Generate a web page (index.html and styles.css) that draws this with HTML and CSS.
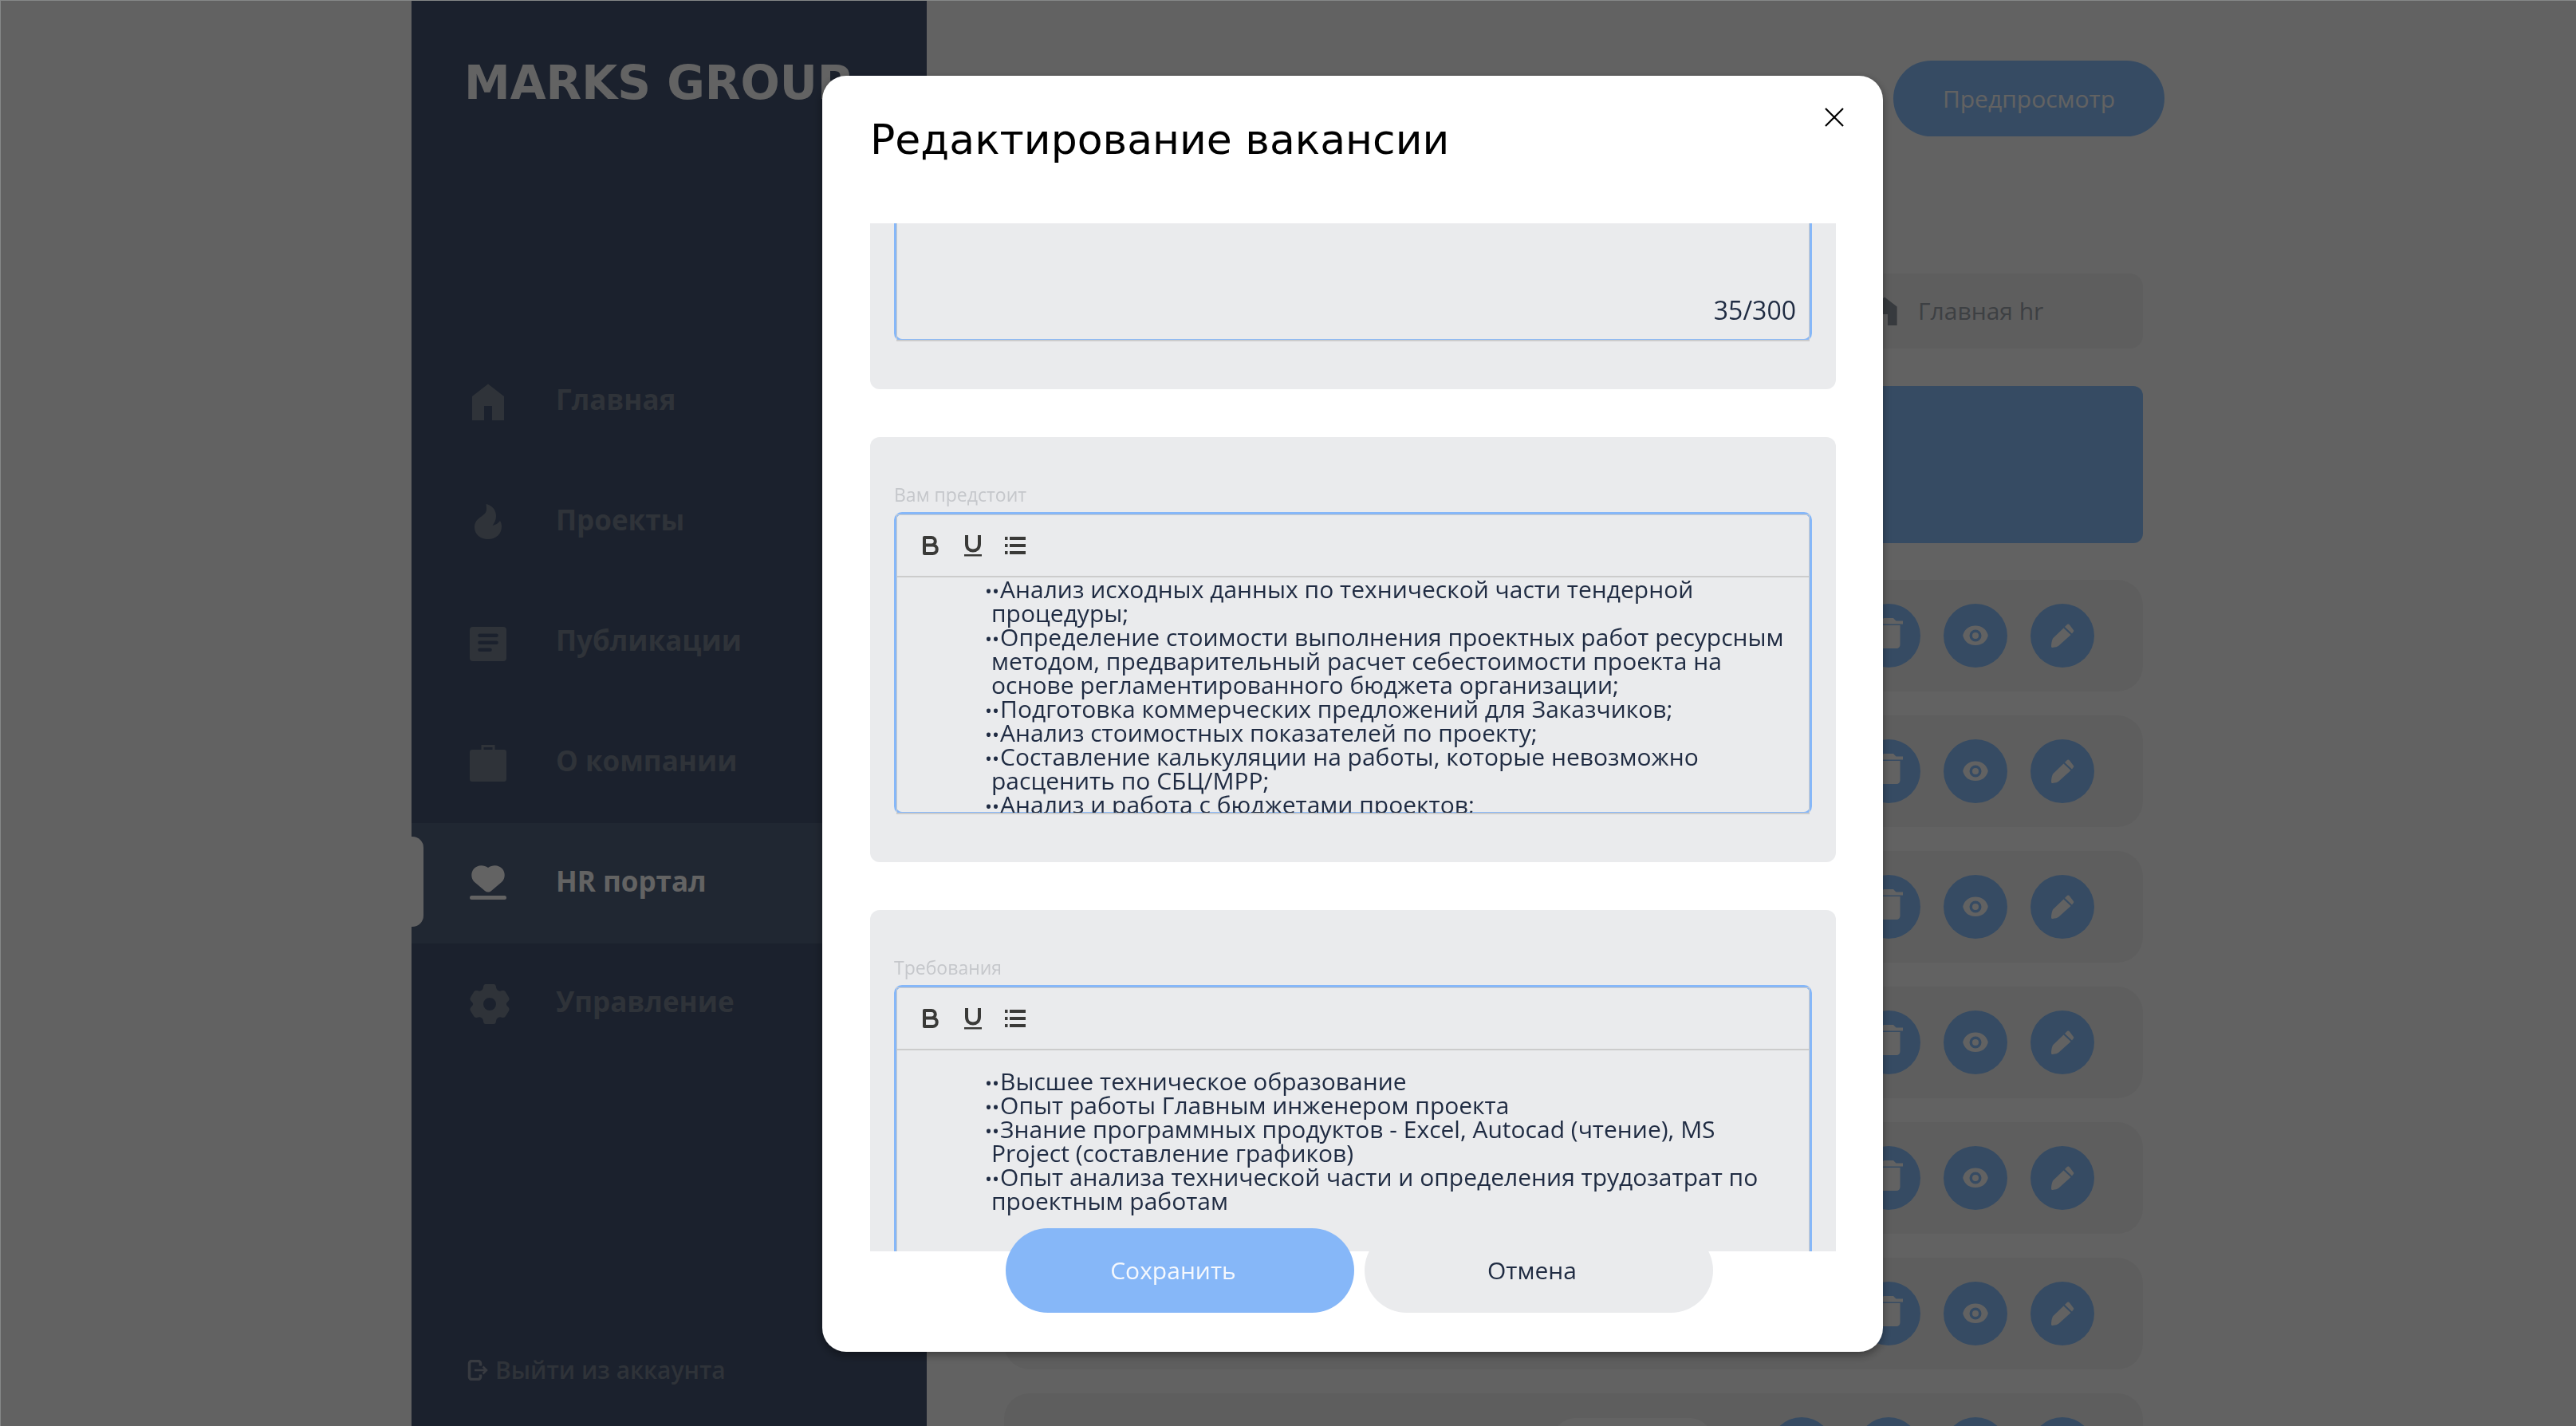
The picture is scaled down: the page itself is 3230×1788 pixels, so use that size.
FILE: index.html
```html
<!DOCTYPE html>
<html lang="ru">
<head>
<meta charset="utf-8">
<title>Редактирование вакансии</title>
<meta name="viewport" content="width=device-width, initial-scale=1">
<link rel="stylesheet" href="styles.css">
</head>
<body>
<svg class="sprite" aria-hidden="true">
  <symbol id="i-home" viewBox="0 0 46 46"><path d="M23 0.500L3 16v30h15V28h10v18h15V16z"/></symbol>
  <symbol id="i-fire" viewBox="0 0 46 46"><path d="M20.500 0C28 1.500 33 7.500 33 15c0 5-2 8-4.500 12C33 26 36 24 38 21c1.200 2 2 4.500 2 7C40 38 32.500 44 23 44S6 38 6 29c0-6 3-9.500 8-13 5-3.500 7-5.500 7-10 0-2-.2-4-.5-6z"/></symbol>
  <symbol id="i-article" viewBox="0 0 46 46"><path fill-rule="evenodd" d="M4 3h38a4 4 0 0 1 4 4v35a4 4 0 0 1-4 4H4a4 4 0 0 1-4-4V7a4 4 0 0 1 4-4zm8.500 8.500a2.300 2.300 0 0 0 0 4.600h21a2.300 2.300 0 0 0 0-4.600zm0 9a2.300 2.300 0 0 0 0 4.600h21a2.300 2.300 0 0 0 0-4.600zm0 9a2.300 2.300 0 0 0 0 4.600h13a2.300 2.300 0 0 0 0-4.600z"/></symbol>
  <symbol id="i-case" viewBox="0 0 46 46"><path fill-rule="evenodd" d="M14.500 6V0h17v6H43a3 3 0 0 1 3 3v34a3 3 0 0 1-3 3H3a3 3 0 0 1-3-3V9a3 3 0 0 1 3-3zm3 0h11V3h-11z"/></symbol>
  <symbol id="i-heart" viewBox="0 0 46 46"><path d="M23 3C29-1.500 37-.5 41 4.500c4 5 3.500 12-1 16.500L27 32c-2.500 2-5.500 2-8 0L6 21C1.500 16.500 1 9.500 5 4.500 9-.5 17-1.500 23 3z"/><rect y="38" width="46" height="5" rx="2.500"/></symbol>
  <symbol id="i-gear" viewBox="0 0 50 50"><path fill-rule="evenodd" d="M20 0h10c2 0 3 2 3 4 .4 3 3 5.500 6 4.500 3-1 5-.5 6 1.500l4 6.500c1.500 3-.5 4.500-2 6-1.500 1.500-1.500 3.500 0 5s3.500 3 2 6L45 40c-1 2-3 2.500-6 1.500s-5.600 1.500-6 4.500c0 2-1 4-3 4H20c-2 0-3-2-3-4-.4-3-3-5.500-6-4.500s-5 .5-6-1.500l-4-6.500c-1.500-3 .5-4.500 2-6s1.500-3.500 0-5-3.500-3-2-6L5 10c1-2 3-2.500 6-1.500s5.600-1.500 6-4.500c0-2 1-4 3-4zm5 17a8 8 0 1 0 0 16 8 8 0 0 0 0-16z"/></symbol>
  <symbol id="i-exit" viewBox="0 0 26 26"><g fill="none" stroke="currentColor" stroke-width="3.500"><path d="M16.500 7.500V4.500a3 3 0 0 0-3-3h-8a3 3 0 0 0-3 3v17a3 3 0 0 0 3 3h8a3 3 0 0 0 3-3v-3"/><path d="M9 13h14M19.500 8.500L24 13l-4.500 4.500" stroke-width="2.500"/></g></symbol>
  <symbol id="i-trash" viewBox="0 0 80 80"><path d="M34 18h12l3.500 3.500H58v4H22v-4h8.500zM25.500 27h29v24.500a4.500 4.500 0 0 1-4.500 4.500H30a4.500 4.500 0 0 1-4.500-4.500z"/></symbol>
  <symbol id="i-eye" viewBox="0 0 80 80"><path fill-rule="evenodd" d="M40 27.500c8 0 13 4 15.500 11a3.500 3.500 0 0 1 0 2.500C53 48 48 52 40 52s-13-4-15.500-11a3.500 3.500 0 0 1 0-2.500c2.500-7 7.500-11 15.500-11zm0 5a7.500 7.500 0 1 0 0 15 7.500 7.500 0 0 0 0-15z"/><circle cx="40" cy="40" r="4"/></symbol>
  <symbol id="i-pencil" viewBox="0 0 80 80"><path d="M49 26.500c-1.500-1.500-2.500-1-4 .5l-2 2 9 8.500 1.500-2c1-1 1-2 0-3zM41.500 30.500L29 42.500c-1.500 1.500-2.500 4-3 10.500 0 1.500.5 2 1.500 2 4-.5 6-1 8-2.500l15-13.500z"/></symbol>
  <symbol id="i-close" viewBox="0 0 24 24"><path d="M1 1l22 22M23 1L1 23" fill="none" stroke="currentColor" stroke-width="2.200"/></symbol>
  <symbol id="i-bold" viewBox="0 0 36 36"><g fill="none" stroke="currentColor" stroke-width="4" stroke-linejoin="round"><path d="M10 8h9a4.700 4.700 0 0 1 0 9.500h-9zM10 17.500h10.500a5 5 0 0 1 0 10.500H10z"/></g></symbol>
  <symbol id="i-underline" viewBox="0 0 36 36"><path d="M10 5v11c0 5.500 3.500 8.500 8 8.500s8-3 8-8.500V5" fill="none" stroke="currentColor" stroke-width="4"/><path d="M7 29h22v2.500H7z"/></symbol>
  <symbol id="i-list" viewBox="0 0 36 36"><path d="M11 7h20v4H11zm0 9h20v4H11zm0 9h20v4H11zM5 7h3.500v4H5zm0 9h3.500v4H5zm0 9h3.500v4H5z"/></symbol>
</svg>

<div class="app">
  <aside class="sidebar">
    <a class="logo" href="#">MARKS GROUP</a>
    <nav class="menu">
      <a class="menu-item" href="#"><svg class="menu-icon"><use href="#i-home"/></svg>Главная</a>
      <a class="menu-item" href="#"><svg class="menu-icon"><use href="#i-fire"/></svg>Проекты</a>
      <a class="menu-item" href="#"><svg class="menu-icon"><use href="#i-article"/></svg>Публикации</a>
      <a class="menu-item" href="#"><svg class="menu-icon"><use href="#i-case"/></svg>О компании</a>
      <a class="menu-item menu-item-active" href="#" aria-current="page"><svg class="menu-icon"><use href="#i-heart"/></svg>HR портал</a>
      <a class="menu-item" href="#"><svg class="menu-icon menu-icon-gear"><use href="#i-gear"/></svg>Управление</a>
    </nav>
    <button class="logout" type="button"><svg class="logout-icon"><use href="#i-exit"/></svg>Выйти из аккаунта</button>
  </aside>

  <main class="main">
    <header class="topbar"><button class="preview" type="button">Предпросмотр</button></header>
    <div class="content">
      <div class="tabs"><a class="tab" href="#"><svg class="tab-icon"><use href="#i-home"/></svg>Главная hr</a></div>
      <div class="banner"></div>
      <ul class="vacancies">
        <li class="vacancy"><span class="badge"></span><div class="actions"><button class="action" type="button" aria-label="Добавить"></button><button class="action" type="button" aria-label="Удалить"><svg><use href="#i-trash"/></svg></button><button class="action" type="button" aria-label="Показать"><svg><use href="#i-eye"/></svg></button><button class="action" type="button" aria-label="Изменить"><svg><use href="#i-pencil"/></svg></button></div></li>
        <li class="vacancy"><span class="badge"></span><div class="actions"><button class="action" type="button" aria-label="Добавить"></button><button class="action" type="button" aria-label="Удалить"><svg><use href="#i-trash"/></svg></button><button class="action" type="button" aria-label="Показать"><svg><use href="#i-eye"/></svg></button><button class="action" type="button" aria-label="Изменить"><svg><use href="#i-pencil"/></svg></button></div></li>
        <li class="vacancy"><span class="badge"></span><div class="actions"><button class="action" type="button" aria-label="Добавить"></button><button class="action" type="button" aria-label="Удалить"><svg><use href="#i-trash"/></svg></button><button class="action" type="button" aria-label="Показать"><svg><use href="#i-eye"/></svg></button><button class="action" type="button" aria-label="Изменить"><svg><use href="#i-pencil"/></svg></button></div></li>
        <li class="vacancy"><span class="badge"></span><div class="actions"><button class="action" type="button" aria-label="Добавить"></button><button class="action" type="button" aria-label="Удалить"><svg><use href="#i-trash"/></svg></button><button class="action" type="button" aria-label="Показать"><svg><use href="#i-eye"/></svg></button><button class="action" type="button" aria-label="Изменить"><svg><use href="#i-pencil"/></svg></button></div></li>
        <li class="vacancy"><span class="badge"></span><div class="actions"><button class="action" type="button" aria-label="Добавить"></button><button class="action" type="button" aria-label="Удалить"><svg><use href="#i-trash"/></svg></button><button class="action" type="button" aria-label="Показать"><svg><use href="#i-eye"/></svg></button><button class="action" type="button" aria-label="Изменить"><svg><use href="#i-pencil"/></svg></button></div></li>
        <li class="vacancy"><span class="badge"></span><div class="actions"><button class="action" type="button" aria-label="Добавить"></button><button class="action" type="button" aria-label="Удалить"><svg><use href="#i-trash"/></svg></button><button class="action" type="button" aria-label="Показать"><svg><use href="#i-eye"/></svg></button><button class="action" type="button" aria-label="Изменить"><svg><use href="#i-pencil"/></svg></button></div></li>
        <li class="vacancy"><span class="badge"></span><div class="actions"><button class="action" type="button" aria-label="Добавить"></button><button class="action" type="button" aria-label="Удалить"><svg><use href="#i-trash"/></svg></button><button class="action" type="button" aria-label="Показать"><svg><use href="#i-eye"/></svg></button><button class="action" type="button" aria-label="Изменить"><svg><use href="#i-pencil"/></svg></button></div></li>
      </ul>
    </div>
  </main>
</div>

<div class="overlay">
  <section class="modal" role="dialog" aria-modal="true" aria-labelledby="modal-title">
    <button class="close" type="button" aria-label="Закрыть"><svg><use href="#i-close"/></svg></button>
    <h1 class="modal-title" id="modal-title">Редактирование вакансии</h1>
    <div class="fields">
      <div class="field field-cut">
        <div class="editor"><div class="editor-box"><span class="counter">35/300</span></div></div>
      </div>

      <div class="field">
        <span class="label" id="label-tasks">Вам предстоит</span>
        <div class="editor">
          <div class="editor-box">
            <div class="toolbar">
              <button class="tool" type="button" aria-label="Полужирный"><svg><use href="#i-bold"/></svg></button>
              <button class="tool" type="button" aria-label="Подчёркнутый"><svg><use href="#i-underline"/></svg></button>
              <button class="tool" type="button" aria-label="Список"><svg><use href="#i-list"/></svg></button>
            </div>
            <div class="text text-scrolled" contenteditable="true" role="textbox" aria-multiline="true" aria-labelledby="label-tasks" spellcheck="false">
              <ul class="bullets">
                <li><span class="dots">••</span>Анализ исходных данных по технической части тендерной<br>процедуры;</li>
                <li><span class="dots">••</span>Определение стоимости выполнения проектных работ ресурсным<br>методом, предварительный расчет себестоимости проекта на<br>основе регламентированного бюджета организации;</li>
                <li><span class="dots">••</span>Подготовка коммерческих предложений для Заказчиков;</li>
                <li><span class="dots">••</span>Анализ стоимостных показателей по проекту;</li>
                <li><span class="dots">••</span>Составление калькуляции на работы, которые невозможно<br>расценить по СБЦ/МРР;</li>
                <li><span class="dots">••</span>Анализ и работа с бюджетами проектов;</li>
              </ul>
            </div>
          </div>
        </div>
      </div>

      <div class="field">
        <span class="label" id="label-skills">Требования</span>
        <div class="editor">
          <div class="editor-box">
            <div class="toolbar">
              <button class="tool" type="button" aria-label="Полужирный"><svg><use href="#i-bold"/></svg></button>
              <button class="tool" type="button" aria-label="Подчёркнутый"><svg><use href="#i-underline"/></svg></button>
              <button class="tool" type="button" aria-label="Список"><svg><use href="#i-list"/></svg></button>
            </div>
            <div class="text" contenteditable="true" role="textbox" aria-multiline="true" aria-labelledby="label-skills" spellcheck="false">
              <ul class="bullets">
                <li><span class="dots">••</span>Высшее техническое образование</li>
                <li><span class="dots">••</span>Опыт работы Главным инженером проекта</li>
                <li><span class="dots">••</span>Знание программных продуктов - Excel, Autocad (чтение), MS<br>Project (составление графиков)</li>
                <li><span class="dots">••</span>Опыт анализа технической части и определения трудозатрат по<br>проектным работам</li>
              </ul>
            </div>
          </div>
        </div>
      </div>
    </div>
    <footer class="buttons">
      <button class="button button-primary" type="button">Сохранить</button>
      <button class="button" type="button">Отмена</button>
    </footer>
  </section>
</div>
</body>
</html>
```
FILE: styles.css
```css
* { box-sizing: border-box; }

body {
  margin: 0;
  background: #f5f5f5;
  color: #1f2b42;
  font: 400 30px/30px "Open Sans", "Noto Sans", sans-serif;
}

button {
  margin: 0;
  padding: 0;
  border: 0;
  background: none;
  color: inherit;
  font: inherit;
}

a { color: inherit; text-decoration: none; }
svg { display: block; fill: currentColor; }
.sprite { display: none; }

/* Page */
.app {
  display: flex;
  max-width: 2198px;
  height: 100vh;
  margin: 0 auto;
  overflow: hidden;
}

.sidebar {
  display: flex;
  flex: 0 0 646px;
  flex-direction: column;
  padding: 76px 0 50px;
  background: #445370;
  color: #76808f;
}

.logo {
  padding-left: 66px;
  color: #f8f8f8;
  font: 700 58px/56px "DejaVu Sans", sans-serif;
  white-space: nowrap;
}

.menu { margin-top: 296px; }

.menu-item {
  display: flex;
  align-items: center;
  gap: 62px;
  height: 151px;
  padding: 0 0 6px 73px;
  font-size: 35px;
  font-weight: 700;
  line-height: 40px;
}

.menu-icon { width: 46px; height: 46px; margin-top: 6px; }
.menu-icon-gear { width: 50px; height: 50px; margin-right: -4px; }

.menu-item-active {
  position: relative;
  background: #52627d;
  color: #f8f8f8;
}

.menu-item-active::before {
  content: "";
  position: absolute;
  top: 17px;
  bottom: 21px;
  left: 0;
  width: 15px;
  border-radius: 0 14px 14px 0;
  background: #f5f5f5;
}

.logout {
  display: flex;
  align-items: center;
  gap: 9px;
  height: 40px;
  margin: auto 0 0 70px;
  font-weight: 600;
}

.logout-icon { width: 26px; height: 26px; color: #8d93a3; }

.main { flex: 1; padding: 76px 0 0 97px; }
.topbar { display: flex; justify-content: flex-end; }

.preview {
  width: 340px;
  height: 95px;
  border-radius: 48px;
  background: #87bcf8;
  color: #f5f5f5;
}

.content { padding: 172px 27px 0 0; }
.tabs { display: flex; justify-content: flex-end; }

.tab {
  display: flex;
  align-items: center;
  gap: 24px;
  width: 400px;
  height: 94px;
  padding-left: 58px;
  border-radius: 16px;
  background: #ebebeb;
  color: #9aa0a8;
}

.tab-icon { width: 36px; height: 36px; color: #8b929c; }

.banner {
  height: 197px;
  margin: 47px 0 46px;
  border-radius: 12px;
  background: #87bcf8;
}

.vacancies {
  display: grid;
  gap: 30px;
  margin: 0;
  padding: 0;
  list-style: none;
}

.vacancy {
  display: flex;
  align-items: center;
  justify-content: flex-end;
  gap: 71px;
  height: 140px;
  padding-right: 61px;
  border-radius: 32px;
  background: #ebebeb;
}

.badge {
  width: 202px;
  height: 78px;
  border-radius: 30px;
  background: #f8f8f8;
}

.actions { display: flex; gap: 29px; }

.action {
  width: 80px;
  height: 80px;
  border-radius: 50%;
  background: #87bcf8;
  color: #f5f5f5;
}

.action svg { width: 80px; height: 80px; }

/* Dialog */
.overlay {
  position: fixed;
  inset: 0;
  display: flex;
  justify-content: center;
  padding: 94px 0 93px 161px;
  border: solid #868888;
  border-width: 1px 0 0 1px;
  background: rgba(0, 0, 0, 0.6);
}

.modal {
  position: relative;
  display: flex;
  flex-direction: column;
  width: 1330px;
  padding: 50px 59px 49px 60px;
  border-radius: 30px;
  background: #fff;
  box-shadow: 0 4px 12px rgba(0, 0, 0, 0.4);
}

.close { position: absolute; top: 40px; right: 49px; color: #000; }
.close svg { width: 24px; height: 24px; }

.modal-title {
  margin: 0 0 75px;
  color: #000;
  font: 400 52px/60px "DejaVu Sans", sans-serif;
}

.fields {
  display: flex;
  flex: 1;
  flex-direction: column;
  gap: 60px;
  min-height: 0;
  overflow: hidden;
}

.field {
  flex: none;
  padding: 60px 30px;
  border-radius: 12px;
  background: #eaebed;
}

.label {
  display: block;
  margin-bottom: 10px;
  color: #c5c7cb;
  font-size: 23px;
  line-height: 24px;
}

.editor {
  height: 379px;
  border: 3px solid #86b7f8;
  border-radius: 10px;
}

.editor-box {
  height: 376px;
  border: 2px solid #ccc;
  border-width: 1px 1px 2px;
  overflow: hidden;
}

.field-cut { padding-top: 0; border-radius: 0 0 12px 12px; }
.field-cut .editor { height: 148px; border-top: 0; border-radius: 0 0 10px 10px; }
.field-cut .editor-box { display: flex; align-items: flex-end; justify-content: flex-end; height: 148px; padding: 0 16px 22px; border-top: 0; }
.counter { font-size: 32px; }

.toolbar {
  display: flex;
  align-items: center;
  gap: 17px;
  height: 78px;
  padding-left: 24px;
  border-bottom: 2px solid #ccc;
  color: #3a3a38;
}

.tool svg { width: 36px; height: 36px; }
.text { padding: 24px 0; outline: 0; }
.text-scrolled { padding-top: 0; }

.bullets {
  margin: 0;
  padding: 0 0 0 118px;
  list-style: none;
  white-space: nowrap;
}

.dots {
  margin: 0 1px 0 -8px;
  font-size: 24px;
  line-height: 20px;
}

.buttons {
  position: relative;
  display: flex;
  justify-content: center;
  gap: 13px;
  margin-top: -29px;
  padding-left: 15px;
}

.button {
  width: 437px;
  height: 106px;
  padding-right: 16px;
  border-radius: 53px;
  background: #eaebed;
}

.button-primary { background: #86b7f8; color: #f5f8fd; }
```
